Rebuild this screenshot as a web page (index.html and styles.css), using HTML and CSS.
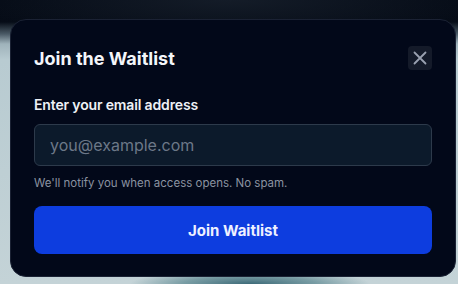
FILE: index.html
```html
<!DOCTYPE html>
<html lang="en">
  <head>
    <meta charset="UTF-8" />
    <meta name="viewport" content="width=device-width, initial-scale=1.0" />
    <title>Join the Waitlist</title>
    <link rel="stylesheet" href="styles.css">
  </head>
  <body>
    <div class="backdrop">
      <div class="modal">
        <div class="modal-header">
          <h2>Join the Waitlist</h2>
          <button class="close-button" aria-label="Close">
            <svg width="16" height="16" viewBox="0 0 16 16" fill="none">
              <path d="M2.5 2.5 L13.5 13.5 M13.5 2.5 L2.5 13.5" stroke="#9aa1b0" stroke-width="1.8" stroke-linecap="round" />
            </svg>
          </button>
        </div>

        <form class="waitlist-form" onsubmit="return false">
          <label for="email">Enter your email address</label>
          <input id="email" type="email" placeholder="you@example.com" />
          <p class="hint">We'll notify you when access opens. No spam.</p>
          <button type="submit" class="submit-button">Join Waitlist</button>
        </form>
      </div>
    </div>
  </body>
</html>
```

FILE: styles.css
```css
* {
  box-sizing: border-box;
}

html,
body {
  margin: 0;
  height: 100%;
}

body {
  font-family: Inter, "Noto Sans", sans-serif;
  overflow: hidden;
}

.backdrop {
  height: 100%;
  padding: 19px 2px 7px 10px;
  background:
    radial-gradient(ellipse 120px 14px at 250px 284px, #3d6a78 0%, rgba(70, 120, 130, 0.6) 55%, rgba(180, 200, 205, 0) 100%),
    radial-gradient(ellipse 260px 40px at 230px 0px, #141c28 0%, rgba(5, 11, 22, 0) 100%),
    linear-gradient(to bottom, #050b16 0px, #060c17 22px, #4a5a66 34px, #9fb3bb 44px, #b8cbd1 60px, #c4d3d7 100%);
}

.modal {
  height: 258px;
  background-color: #020819;
  border: 1px solid #1b2234;
  border-radius: 16px;
  padding: 26px 23px 23px 23px;
}

.modal-header {
  display: flex;
  justify-content: space-between;
  align-items: center;
  margin-bottom: 26px;
}

h2 {
  margin: 0;
  font-size: 18px;
  font-weight: 700;
  color: #f4f6fa;
}

.close-button {
  width: 24px;
  height: 24px;
  padding: 0;
  border: none;
  border-radius: 4px;
  background-color: #141a29;
  display: flex;
  align-items: center;
  justify-content: center;
  cursor: pointer;
}

.waitlist-form label {
  display: block;
  font-size: 14px;
  font-weight: 600;
  letter-spacing: -0.15px;
  color: #eef1f6;
  margin-bottom: 11px;
}

.waitlist-form input {
  display: block;
  width: 100%;
  height: 42px;
  padding: 0 15px;
  background-color: #0c1a2b;
  border: 1px solid #2d3a4b;
  border-radius: 6px;
  font-family: inherit;
  font-size: 16px;
  color: #e5e9f0;
  outline: none;
}

.waitlist-form input::placeholder {
  color: #6c7888;
}

.hint {
  margin: 10px 0 16px;
  font-size: 11.5px;
  color: #8b93a1;
}

.submit-button {
  display: block;
  width: 100%;
  height: 48px;
  border: none;
  border-radius: 8px;
  background-color: #0d3ddf;
  color: #eef1ff;
  font-family: inherit;
  font-size: 15px;
  font-weight: 700;
  cursor: pointer;
}
```
